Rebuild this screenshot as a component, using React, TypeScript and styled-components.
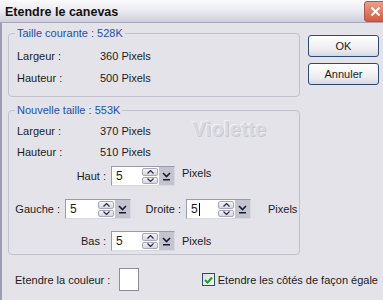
import React from 'react'
import styled, { createGlobalStyle } from 'styled-components'

const GlobalStyle = createGlobalStyle`
  html, body { margin: 0; padding: 0; background: #e4e3ea; }
  body { font-family: "Liberation Sans", Arial, sans-serif; font-size: 11px; color: #1c1c1c; }
`

const Window = styled.div`
  width: 383px;
  height: 300px;
  overflow: hidden;
  background: #e4e3ea;
  display: flex;
  flex-direction: column;
`

const TitleBar = styled.div`
  height: 22px;
  flex: none;
  display: flex;
  align-items: center;
  justify-content: space-between;
  padding-left: 5px;
  background: linear-gradient(#fbfbfd 0%, #ececf2 45%, #cfcfdc 100%);
  border-bottom: 1px solid #a6a6b8;
`

const Title = styled.div`
  font-size: 12.5px;
  font-weight: bold;
  color: #111;
  margin-top: 1px;
`

const CloseButton = styled.div`
  width: 21px;
  height: 19px;
  margin-right: -4px;
  border-radius: 3px;
  border: 1px solid #b05848;
  background: linear-gradient(#eba08c, #d25a40);
  display: flex;
  align-items: center;
  justify-content: center;
`

const Body = styled.div`
  flex: 1;
  border-left: 2px solid #9c9cb4;
  padding: 10px 4px 0 6px;
  display: flex;
  flex-direction: column;
`

const Top = styled.div`
  display: flex;
  gap: 8px;
`

const Groups = styled.div`
  width: 293px;
  display: flex;
  flex-direction: column;
  gap: 13px;
`

const Group = styled.div<{ $padTop: number; $padBottom: number }>`
  position: relative;
  border: 1px solid #c2c2cc;
  border-radius: 4px;
  padding: ${p => p.$padTop}px 0 ${p => p.$padBottom}px 8px;
  display: flex;
  flex-direction: column;
`

const Legend = styled.span`
  position: absolute;
  top: -7px;
  left: 6px;
  padding: 0 2px;
  background: #e4e3ea;
  color: #1d4fb0;
  line-height: 13px;
`

const InfoRow = styled.div<{ $h: number }>`
  height: ${p => p.$h}px;
  display: grid;
  grid-template-columns: 83px auto;
  align-items: center;
`

const Watermark = styled.div`
  position: absolute;
  top: 7px;
  left: 183px;
  font-size: 20px;
  font-weight: bold;
  color: #dadae0;
  letter-spacing: 0.3px;
  text-shadow: 1px 1px 0 #c8c8d2, -1px -1px 0 #f2f2f5;
`

const SpinRow = styled.div<{ $top: number }>`
  display: flex;
  align-items: center;
  height: 20px;
  margin-top: ${p => p.$top}px;
`

const SpinLabel = styled.div<{ $w: number; $left: number }>`
  box-sizing: border-box;
  width: ${p => p.$w}px;
  margin-left: ${p => p.$left}px;
  text-align: right;
  padding-right: 5px;
  flex: none;
`

const Unit = styled.div<{ $left: number; $dy?: number }>`
  margin-left: ${p => p.$left}px;
  position: relative;
  top: ${p => p.$dy || 0}px;
`

const SpinBox = styled.div<{ $w: number }>`
  width: ${p => p.$w}px;
  height: 20px;
  box-sizing: border-box;
  display: flex;
  border: 1px solid #9a9aaa;
  border-right-color: #d8d8e0;
  border-bottom-color: #d8d8e0;
  background: #fff;
  flex: none;
`

const Field = styled.div`
  flex: 1;
  padding-left: 4px;
  display: flex;
  align-items: center;
  font-size: 12px;
`

const Caret = styled.span`
  display: inline-block;
  width: 1px;
  height: 13px;
  background: #000;
  margin-left: 1px;
`

const Arrows = styled.div`
  width: 17px;
  display: flex;
  flex-direction: column;
  gap: 1px;
  padding: 1px 1px 1px 0;
  box-sizing: border-box;
`

const ArrowBtn = styled.div`
  flex: 1;
  border: 1px solid #a8a8bc;
  border-radius: 2px;
  background: linear-gradient(#f4f4f8, #d6d6e2);
  display: flex;
  align-items: center;
  justify-content: center;
`

const Drop = styled.div`
  width: 15px;
  background: #c4c4d0;
  display: flex;
  align-items: center;
  justify-content: center;
`

const Buttons = styled.div`
  display: flex;
  flex-direction: column;
  gap: 6px;
  margin-top: 2px;
`

const Button = styled.div`
  width: 71px;
  height: 22px;
  box-sizing: border-box;
  border: 1px solid #2a4a78;
  border-radius: 3px;
  background: linear-gradient(#ffffff, #ececf0 70%, #d6d6de);
  display: flex;
  align-items: center;
  justify-content: center;
  font-size: 11px;
`

const Footer = styled.div`
  display: flex;
  align-items: center;
  height: 23px;
  margin-top: 13px;
  padding-left: 7px;
`

const Swatch = styled.div`
  width: 20px;
  height: 23px;
  box-sizing: border-box;
  background: #fff;
  border: 1px solid #8c8c9c;
  margin-left: 9px;
`

const CheckLabel = styled.label`
  margin-left: auto;
  display: flex;
  align-items: center;
  gap: 3px;
  margin-right: 1px;
`

const CheckBox = styled.div`
  width: 13px;
  height: 13px;
  box-sizing: border-box;
  border: 1px solid #1c5180;
  background: linear-gradient(135deg, #dcdcd6, #ffffff);
  display: flex;
  align-items: center;
  justify-content: center;
`

const Spin = ({ value, width, caret }: { value: string; width: number; caret?: boolean }) => (
  <SpinBox $w={width}>
    <Field>
      {value}
      {caret && <Caret />}
    </Field>
    <Arrows>
      <ArrowBtn>
        <svg width="7" height="4" viewBox="0 0 7 4"><path d="M0.5 3.5 L3.5 0.5 L6.5 3.5" fill="none" stroke="#2c2c40" strokeWidth="1.2" /></svg>
      </ArrowBtn>
      <ArrowBtn>
        <svg width="7" height="4" viewBox="0 0 7 4"><path d="M0.5 0.5 L3.5 3.5 L6.5 0.5" fill="none" stroke="#2c2c40" strokeWidth="1.2" /></svg>
      </ArrowBtn>
    </Arrows>
    <Drop>
      <svg width="9" height="10" viewBox="0 0 9 10">
        <path d="M1 2 L4.5 5.5 L8 2" fill="none" stroke="#1a1a30" strokeWidth="1.6" />
        <rect x="1" y="8" width="7" height="1.5" fill="#1a1a30" />
      </svg>
    </Drop>
  </SpinBox>
)

const App = () => (
  <>
    <GlobalStyle />
    <Window>
      <TitleBar>
        <Title>Etendre le canevas</Title>
        <CloseButton>
          <svg width="11" height="11" viewBox="0 0 11 11">
            <path d="M1.5 1.5 L9.5 9.5 M9.5 1.5 L1.5 9.5" stroke="#fff" strokeWidth="2" />
          </svg>
        </CloseButton>
      </TitleBar>
      <Body>
        <Top>
          <Groups>
            <Group $padTop={11} $padBottom={7}>
              <Legend>Taille courante : 528K</Legend>
              <InfoRow $h={22}><span>Largeur :</span><span>360 Pixels</span></InfoRow>
              <InfoRow $h={22}><span>Hauteur :</span><span>500 Pixels</span></InfoRow>
            </Group>
            <Group $padTop={9} $padBottom={3}>
              <Legend>Nouvelle taille : 553K</Legend>
              <Watermark>Violette</Watermark>
              <InfoRow $h={21}><span>Largeur :</span><span>370 Pixels</span></InfoRow>
              <InfoRow $h={21}><span>Hauteur :</span><span>510 Pixels</span></InfoRow>
              <SpinRow $top={4}>
                <SpinLabel $w={102} $left={-8}>Haut :</SpinLabel>
                <Spin value="5" width={64} />
                <Unit $left={7} $dy={-3}>Pixels</Unit>
              </SpinRow>
              <SpinRow $top={13}>
                <SpinLabel $w={53} $left={-5}>Gauche :</SpinLabel>
                <Spin value="5" width={66} />
                <SpinLabel $w={55} $left={0}>Droite :</SpinLabel>
                <Spin value="5" width={65} caret />
                <Unit $left={17}>Pixels</Unit>
              </SpinRow>
              <SpinRow $top={12}>
                <SpinLabel $w={102} $left={-8}>Bas :</SpinLabel>
                <Spin value="5" width={64} />
                <Unit $left={7}>Pixels</Unit>
              </SpinRow>
            </Group>
          </Groups>
          <Buttons>
            <Button>OK</Button>
            <Button>Annuler</Button>
          </Buttons>
        </Top>
        <Footer>
          <span>Etendre la couleur :</span>
          <Swatch />
          <CheckLabel>
            <CheckBox>
              <svg width="9" height="8" viewBox="0 0 9 8">
                <path d="M1 4 L3.5 6.5 L8 1.5" fill="none" stroke="#21a121" strokeWidth="2" />
              </svg>
            </CheckBox>
            <span>Etendre les côtés de façon égale</span>
          </CheckLabel>
        </Footer>
      </Body>
    </Window>
  </>
)

export default App
